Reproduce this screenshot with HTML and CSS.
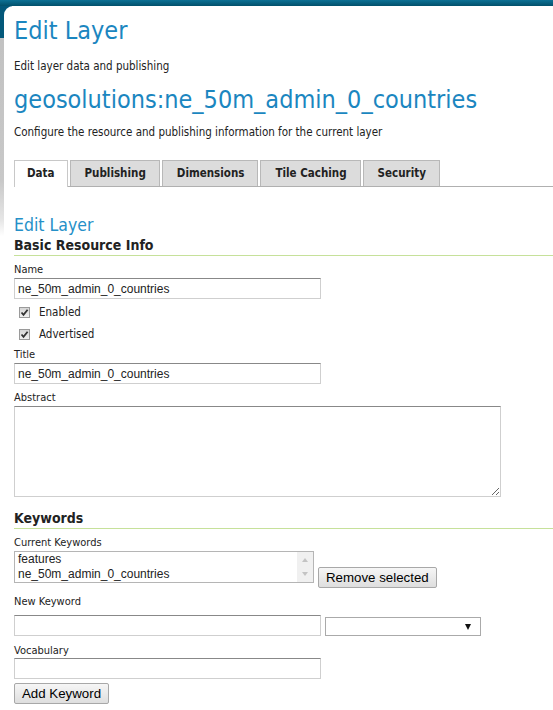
FILE: index.html
```html
<!DOCTYPE html>
<html>
<head>
<meta charset="utf-8">
<link rel="stylesheet" href="styles.css">
</head>
<body>
<div class="panel">
  <h1 class="title first">Edit Layer</h1>
  <p class="desc">Edit layer data and publishing</p>
  <h1 class="title second">geosolutions:ne_50m_admin_0_countries</h1>
  <p class="desc configure">Configure the resource and publishing information for the current layer</p>

  <ul class="tabs">
    <li class="tab active">Data</li>
    <li class="tab">Publishing</li>
    <li class="tab">Dimensions</li>
    <li class="tab">Tile Caching</li>
    <li class="tab">Security</li>
  </ul>

  <h3 class="subhead">Edit Layer</h3>
  <h4 class="section">Basic Resource Info</h4>

  <div class="field">
    <label class="lbl name">Name</label>
    <input class="text" type="text" value="ne_50m_admin_0_countries">
  </div>
  <div class="check-row first-check"><span class="cbox"><svg viewBox="0 0 11 11" width="11" height="11"><path d="M2.5 5.5 L4.5 7.8 L8.6 2.8" fill="none" stroke="#333" stroke-width="1.8"/></svg></span><span>Enabled</span></div>
  <div class="check-row"><span class="cbox"><svg viewBox="0 0 11 11" width="11" height="11"><path d="M2.5 5.5 L4.5 7.8 L8.6 2.8" fill="none" stroke="#333" stroke-width="1.8"/></svg></span><span>Advertised</span></div>

  <div class="field">
    <label class="lbl after-check">Title</label>
    <input class="text" type="text" value="ne_50m_admin_0_countries">
  </div>
  <div class="field">
    <label class="lbl abstract">Abstract</label>
    <textarea class="area"></textarea>
  </div>

  <h4 class="section keywords">Keywords</h4>
  <div class="field">
    <label class="lbl current">Current Keywords</label>
    <div class="kw-row">
      <div class="listbox">
        <div class="items">
          <div>features</div>
          <div>ne_50m_admin_0_countries</div>
        </div>
        <div class="scroll">
          <span class="arrow up"></span>
          <span class="arrow down"></span>
        </div>
      </div>
      <button class="btn remove" type="button">Remove selected</button>
    </div>
  </div>
  <div class="field">
    <label class="lbl newkw">New Keyword</label>
    <div class="kw-row new">
      <input class="text" type="text" value="">
      <div class="select"><span class="tri"></span></div>
    </div>
  </div>
  <div class="field">
    <label class="lbl vocab">Vocabulary</label>
    <input class="text" type="text" value="">
  </div>
  <button class="btn add" type="button">Add Keyword</button>
</div>
</body>
</html>
```

FILE: styles.css
```css
html, body {
  margin: 0;
  padding: 0;
}
body {
  font-family: "DejaVu Sans Condensed", "DejaVu Sans", sans-serif;
  font-stretch: condensed;
  font-size: 11.5px;
  color: #222;
  background:
    linear-gradient(#0d7195, #02506b) 0 0 / 100% 6px no-repeat,
    linear-gradient(#03587a, #03587a) 0 0 / 12px 38px no-repeat,
    linear-gradient(to bottom, #c0c0c0 0, #c8c8c8 180px, #e6e6e6 220px, #fff 236px) 0 0 / 4px 100% no-repeat,
    #fff;
  min-height: 710px;
}
.panel {
  margin: 6px 0 0 4px;
  padding: 0 0 20px 10px;
  background: #fff;
  border-top-left-radius: 9px;
  min-height: 700px;
}
.title {
  font-size: 25px;
  font-weight: normal;
  line-height: 30px;
  color: #1b86c0;
  margin: 0;
}
.title.first { padding-top: 10px; }
.desc {
  margin: 13px 0 0;
  line-height: 14px;
}
.title.second { margin-top: 12px; }
.desc.configure { margin-top: 10px; }

.tabs {
  list-style: none;
  margin: 21px 0 0;
  padding: 0;
  display: flex;
  border-bottom: 1px solid #b0b0b0;
  height: 26px;
}
.tab {
  height: 25px;
  line-height: 25px;
  padding: 0 13px 0 14px;
  margin-right: 2px;
  background: #dcdcdc;
  border: 1px solid #b8b8b8;
  border-bottom: none;
  font-weight: bold;
  font-size: 11.5px;
  color: #222;
}
.tab.active {
  background: #fff;
  height: 26px;
  padding: 0 12px;
  margin-bottom: -1px;
  border-color: #c8c8c8;
}

.subhead {
  font-size: 17.5px;
  font-weight: normal;
  color: #2590c8;
  margin: 28px 0 0;
  line-height: 20px;
}
.section {
  font-size: 14px;
  font-weight: bold;
  color: #222;
  margin: 2px 0 0;
  line-height: 17px;
  padding-bottom: 1px;
  border-bottom: 1px solid #c6e19a;
}
.section.keywords { margin-top: 13px; }

.field {
  display: flex;
  flex-direction: column;
  align-items: flex-start;
}
.lbl {
  font-size: 11px;
  line-height: 13px;
  margin-top: 8px;
  margin-bottom: 2px;
  color: #222;
}
.lbl.name { margin-top: 7px; }
.lbl.after-check { margin-top: 3px; }
.lbl.abstract { margin-top: 7px; }
.lbl.current { margin-top: 7px; }
.lbl.newkw { margin-top: 12px; margin-bottom: 7px; }
.lbl.vocab { margin-bottom: 1px; }

.text {
  box-sizing: border-box;
  width: 307px;
  height: 21px;
  margin: 0;
  padding: 1px 3px;
  border: 1px solid #cfcfcf;
  border-top-color: #888;
  font-family: "Liberation Sans", Arial, sans-serif;
  font-size: 12px;
  color: #222;
  background: #fff;
  outline: none;
}
.check-row {
  display: flex;
  align-items: center;
  height: 22px;
  margin-left: 5px;
  gap: 9px;
  font-size: 11.5px;
}
.check-row.first-check { margin-top: 2px; }
.cbox {
  width: 11px;
  height: 11px;
  box-sizing: border-box;
  border: 1px solid #9a9a9a;
  background: linear-gradient(#d6d6d6, #f0f0f0);
  display: flex;
}
.cbox svg { margin: -1px; }
.area {
  box-sizing: border-box;
  width: 487px;
  height: 91px;
  margin: 0;
  border: 1px solid #cfcfcf;
  border-top-color: #888;
  resize: both;
  font-family: "Liberation Sans", Arial, sans-serif;
}

.kw-row {
  display: flex;
  align-items: flex-end;
  gap: 4px;
}
.kw-row.new { align-items: flex-start; }
.listbox {
  box-sizing: border-box;
  width: 300px;
  height: 32px;
  border: 1px solid #b5b5b5;
  display: flex;
  font-family: "Liberation Sans", Arial, sans-serif;
  font-size: 12px;
  line-height: 15px;
}
.items {
  flex: 1;
  padding: 0 3px;
}
.scroll {
  width: 16px;
  background: #f0f0f0;
  position: relative;
}
.arrow {
  position: absolute;
  left: 5px;
  width: 0;
  height: 0;
  border-left: 3px solid transparent;
  border-right: 3px solid transparent;
}
.arrow.up { top: 6px; border-bottom: 4px solid #c3c3c3; }
.arrow.down { bottom: 6px; border-top: 4px solid #c3c3c3; }

.btn {
  font-family: "Liberation Sans", Arial, sans-serif;
  font-size: 13.3px;
  color: #000;
  background: linear-gradient(#f6f6f6, #dedede);
  border: 1px solid #a8a8a8;
  border-radius: 2px;
  padding: 0 7px;
  height: 21px;
  line-height: 19px;
  margin: 0;
  white-space: nowrap;
}
.btn.remove { margin-bottom: -5px; }
.btn.add { margin-top: 4px; padding: 0 7px; }

.select {
  box-sizing: border-box;
  width: 156px;
  height: 19px;
  margin-top: 2px;
  border: 1px solid #aaa;
  position: relative;
  background: #fff;
}
.tri {
  position: absolute;
  right: 9px;
  top: 6px;
  width: 0;
  height: 0;
  border-left: 3.5px solid transparent;
  border-right: 3.5px solid transparent;
  border-top: 6px solid #111;
}
```
